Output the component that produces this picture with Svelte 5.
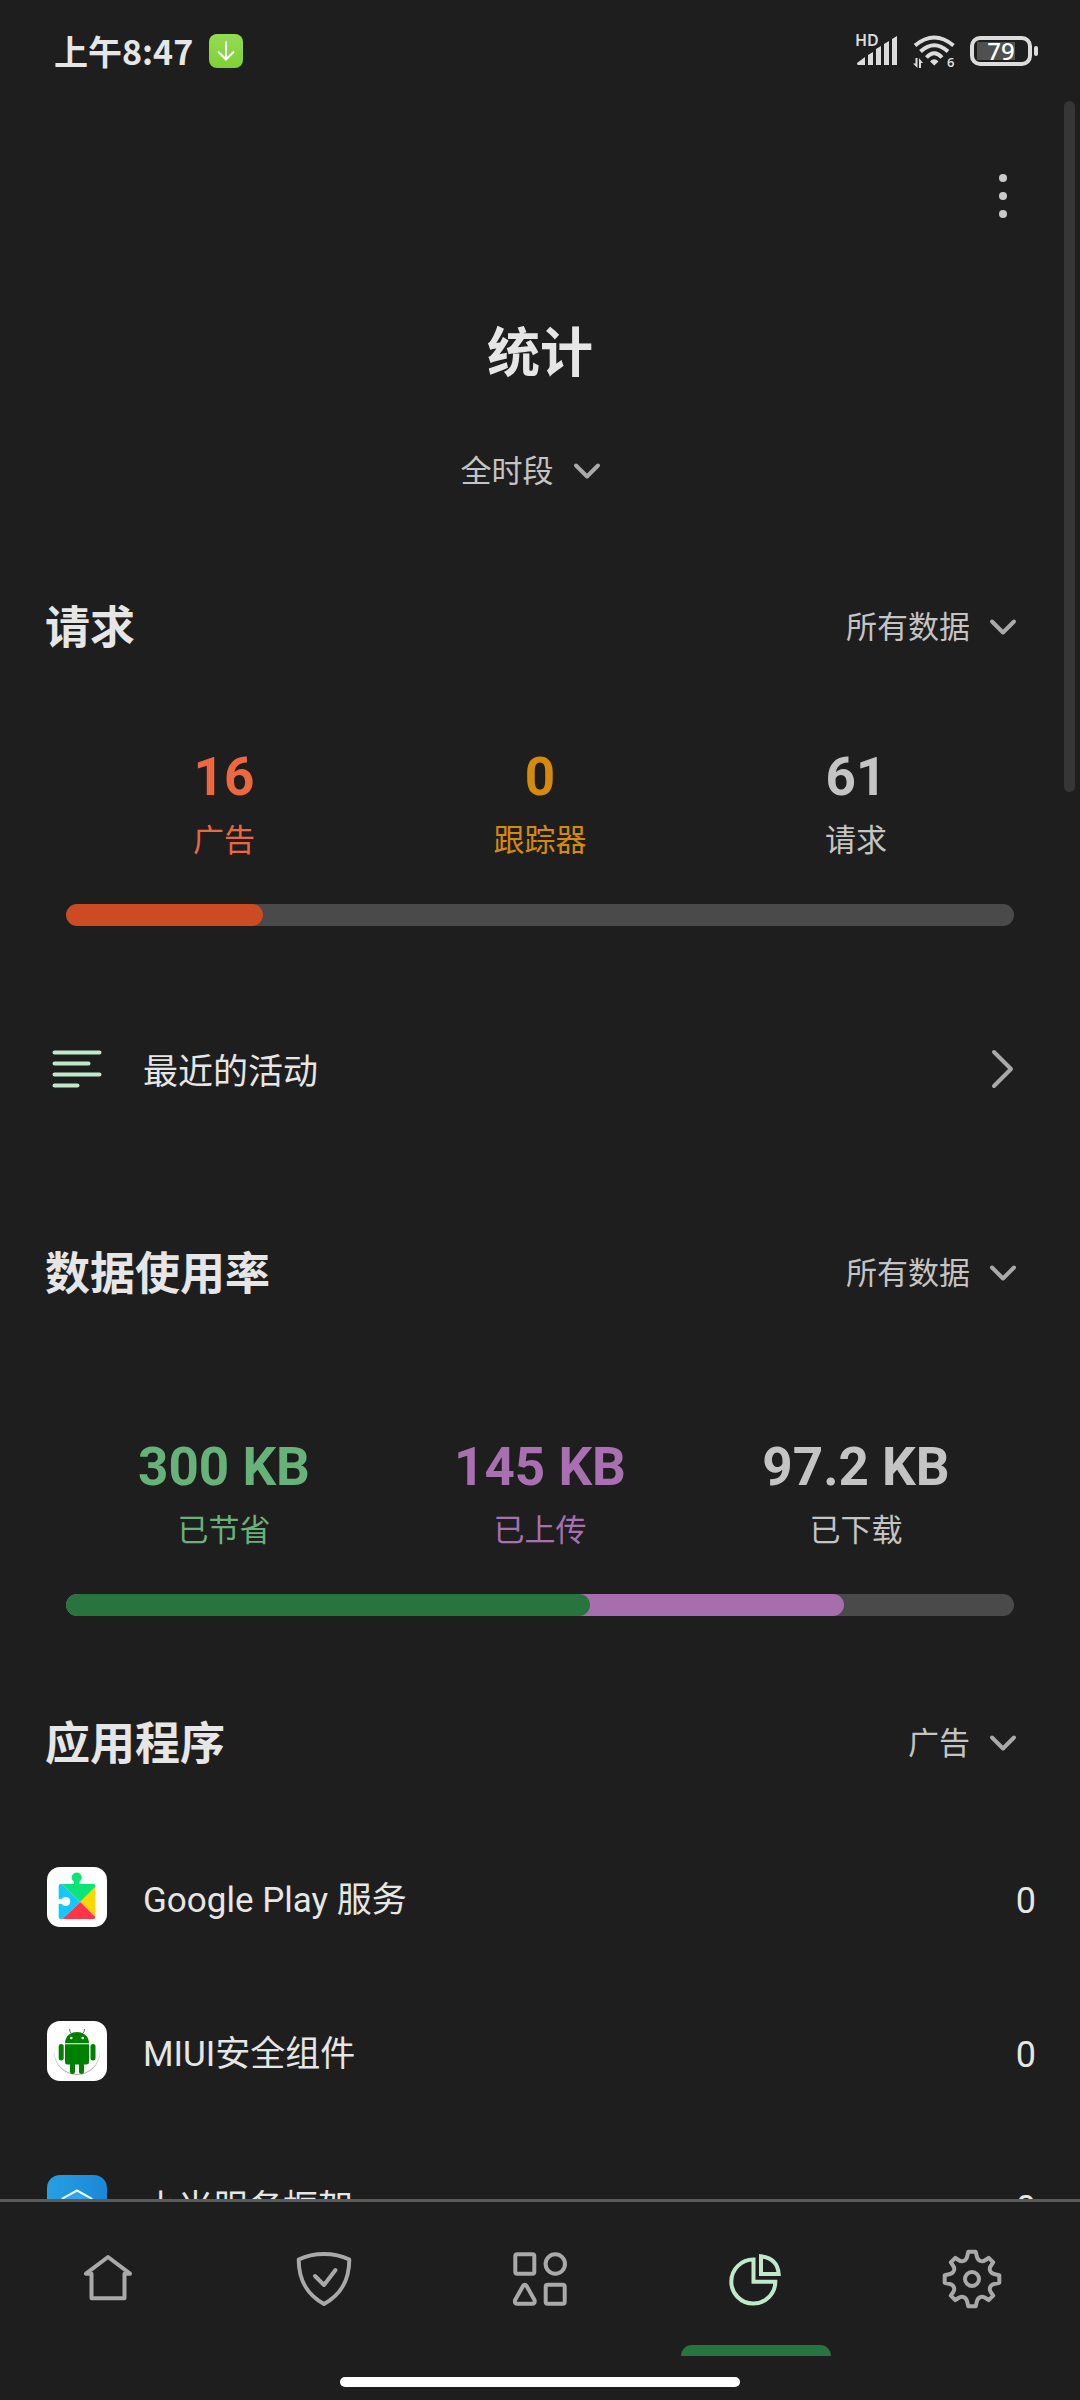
<script lang="ts">
    type Stat = {
        value: string;
        label: string;
        tone: "orange" | "amber" | "green" | "purple" | "neutral";
    };

    type Segment = {
        tone: "orange" | "green" | "purple";
        end: number;
    };

    type AppEntry = {
        name: string;
        icon: "play" | "android" | "xiaomi";
        count: number;
    };

    const requests: Stat[] = [
        { value: "16", label: "广告", tone: "orange" },
        { value: "0", label: "跟踪器", tone: "amber" },
        { value: "61", label: "请求", tone: "neutral" },
    ];

    const traffic: Stat[] = [
        { value: "300 KB", label: "已节省", tone: "green" },
        { value: "145 KB", label: "已上传", tone: "purple" },
        { value: "97.2 KB", label: "已下载", tone: "neutral" },
    ];

    // Longest segment first, so that shorter ones are painted over it
    const requestSegments: Segment[] = [{ tone: "orange", end: 20.8 }];
    const trafficSegments: Segment[] = [
        { tone: "purple", end: 82.1 },
        { tone: "green", end: 55.3 },
    ];

    const apps: AppEntry[] = [
        { name: "Google Play 服务", icon: "play", count: 0 },
        { name: "MIUI安全组件", icon: "android", count: 0 },
        { name: "小米服务框架", icon: "xiaomi", count: 0 },
    ];

    const tabs = ["home", "protection", "apps", "statistics", "settings"];
    let activeTab = $state("statistics");
</script>

{#snippet dropdown(label: string, value: string)}
    <label class="dropdown">
        <select aria-label={label}>
            <option>{value}</option>
        </select>
        <svg class="chevron" viewBox="0 0 34 34" aria-hidden="true">
            <path d="M6 11.5 17 22.5 28 11.5" />
        </svg>
    </label>
{/snippet}

{#snippet statRow(stats: Stat[], segments: Segment[])}
    <div class="stats">
        {#each stats as stat}
            <div class="stat {stat.tone}">
                <strong>{stat.value}</strong>
                <span>{stat.label}</span>
            </div>
        {/each}
    </div>
    <div class="bar">
        {#each segments as segment}
            <div class="segment {segment.tone}" style:width="{segment.end}%"></div>
        {/each}
    </div>
{/snippet}

<div class="screen">
    <header class="status-bar">
        <time>上午8:47</time>
        <svg class="download" viewBox="0 0 34 34" aria-hidden="true">
            <defs>
                <linearGradient id="download-bg" x1="0" y1="0" x2="0" y2="1">
                    <stop offset="0" stop-color="#93dc55" />
                    <stop offset="1" stop-color="#7ed034" />
                </linearGradient>
            </defs>
            <rect width="34" height="34" rx="8" fill="url(#download-bg)" />
            <path d="M17 7.5V25M9 17.5l8 8 8-8" fill="none" stroke="#fff" stroke-width="2" />
        </svg>

        <div class="indicators">
            <svg class="signal" viewBox="0 0 42 34" aria-hidden="true">
                <text x="-1" y="12" font-size="16">HD</text>
                <path d="M1 29 9 23V31H2Q1 31 1 29ZM12 21 17 18V31H12ZM20 15 25 12V31H20ZM28 10 33 7V31H28ZM36 5 41 2V31H36Z" />
            </svg>
            <svg class="wifi" viewBox="0 0 44 36" aria-hidden="true">
                <g fill="none" stroke="#dcdcdc" stroke-width="4">
                    <path d="M3 12.5Q22.3-3.5 41.5 12.5" />
                    <path d="M8.500 18.500Q22.300 6 36 18.500" />
                    <path d="M14.500 24.500Q22.300 16 30 24.500" />
                </g>
                <path d="M18 28.500Q22.300 24 26.500 28.500L22.300 32.500Z" />
                <path d="M3.500 25H5.500V35L1 30.500H3.500ZM7 25 11 30H9V35H7Z" />
                <text x="35" y="34" font-size="13">6</text>
            </svg>
            <div class="battery"><span>79</span></div>
        </div>
    </header>

    <main>
        <div class="toolbar">
            <button type="button" class="menu" aria-label="更多">
                <svg viewBox="0 0 48 48" aria-hidden="true">
                    <circle cx="24" cy="6" r="4" />
                    <circle cx="24" cy="24" r="4" />
                    <circle cx="24" cy="42" r="4" />
                </svg>
            </button>
        </div>

        <h1>统计</h1>
        <div class="period">{@render dropdown("时段", "全时段")}</div>

        <section class="requests">
            <div class="section-head">
                <h2>请求</h2>
                {@render dropdown("请求", "所有数据")}
            </div>
            {@render statRow(requests, requestSegments)}
        </section>

        <button type="button" class="row activity">
            <svg class="row-icon" viewBox="0 0 60 60" aria-hidden="true">
                <path
                    d="M7.500 13.500H52.500M7.500 24.500H41.500M7.500 35.500H52.500M7.500 46.500H30.500"
                    fill="none"
                    stroke="#bfe9c9"
                    stroke-width="4"
                    stroke-linecap="round"
                />
            </svg>
            <span class="row-name">最近的活动</span>
            <svg class="arrow" viewBox="0 0 34 44" aria-hidden="true">
                <path d="M8 5 25 22 8 39" />
            </svg>
        </button>

        <section class="traffic">
            <div class="section-head">
                <h2>数据使用率</h2>
                {@render dropdown("数据使用率", "所有数据")}
            </div>
            {@render statRow(traffic, trafficSegments)}
        </section>

        <section class="applications">
            <div class="section-head">
                <h2>应用程序</h2>
                {@render dropdown("应用程序", "广告")}
            </div>
            <ul>
                {#each apps as app}
                    <li>
                        <button type="button" class="row">
                            <svg class="row-icon" viewBox="0 0 60 60" aria-hidden="true">
                                {#if app.icon === "play"}
                                    <rect width="60" height="60" rx="13" fill="#fff" />
                                    <circle cx="29.700" cy="10.500" r="5" fill="#0be576" />
                                    <path d="M27 12H32.500V20H27Z" fill="#0be576" />
                                    <path d="M13.500 17H15L33.300 35 15.500 52H13.500Q11.700 52 11.700 50V19Q11.700 17 13.500 17Z" fill="#14c8fb" />
                                    <path d="M15 17H46.500Q48.300 17 48.300 19V20L33.300 35Z" fill="#0be576" />
                                    <path d="M48.300 20V50L33.300 35Z" fill="#ffd500" />
                                    <path d="M33.300 35 48.300 50Q48.300 52 46.500 52H15.500Z" fill="#fc3549" />
                                    <circle cx="18.700" cy="34.500" r="4.500" fill="#fff" />
                                    <path d="M11 32.200H17V36.800H11Z" fill="#fff" />
                                {:else if app.icon === "android"}
                                    <rect width="60" height="60" rx="13" fill="#fff" />
                                    <circle cx="30" cy="31" r="23" fill="#aaa" />
                                    <circle cx="30" cy="30" r="23" fill="#fff" />
                                    <g fill="#008000">
                                        <path d="M18 22.300C18 15 23.500 11 30 11S42 15 42 22.300Z" />
                                        <path d="M18 23.300H42V41Q42 43.500 39.500 43.500H37V50.500A2.500 2.500 0 0 1 32 50.500V43.500H28V50.500A2.500 2.500 0 0 1 23 50.500V43.500H20.500Q18 43.500 18 41Z" />
                                        <rect x="11.700" y="23" width="5" height="16.500" rx="2.500" />
                                        <rect x="43.500" y="23" width="5" height="16.500" rx="2.500" />
                                    </g>
                                    <path d="M24.500 12.500Q22.500 11 22.500 8M35.500 12.500Q37.500 11 37.500 8" fill="none" stroke="#567" stroke-width="1" />
                                    <circle cx="24.300" cy="17" r="1.300" fill="#dfffdf" />
                                    <circle cx="35.700" cy="17" r="1.300" fill="#dfffdf" />
                                {:else}
                                    <defs>
                                        <linearGradient id="xiaomi-bg" x1="0" y1="0" x2="1" y2="0">
                                            <stop offset="0" stop-color="#25a0e2" />
                                            <stop offset="1" stop-color="#1d86d8" />
                                        </linearGradient>
                                    </defs>
                                    <rect width="60" height="60" rx="13" fill="url(#xiaomi-bg)" />
                                    <path d="M30 15.500 44.500 23.500V38L30 46 15.500 38V23.500Z" fill="#3aa0e4" stroke="#e6ffff" stroke-width="2" />
                                {/if}
                            </svg>
                            <span class="row-name">{app.name}</span>
                            <span class="row-count">{app.count}</span>
                        </button>
                    </li>
                {/each}
            </ul>
        </section>
    </main>
    <div class="scrollbar"></div>

    <nav>
        {#each tabs as tab}
            <a
                href="#{tab}"
                class:active={tab === activeTab}
                aria-label={tab}
                aria-current={tab === activeTab ? "page" : undefined}
                onclick={() => (activeTab = tab)}
            >
                <svg viewBox="0 0 72 72" aria-hidden="true">
                    {#if tab === "home"}
                        <path d="M36 14 14 30.700H19.500V55.300H52.500V30.700H58Z" />
                    {:else if tab === "protection"}
                        <path d="M36 11C27 11 18 13 10.700 16.500 10.700 39 20 52 36 61 52 52 61.300 39 61.300 16.500 54 13 45 11 36 11Z" />
                        <path d="M27 33 36 42 47.500 27" />
                    {:else if tab === "apps"}
                        <rect x="11.300" y="11.300" width="19" height="19.500" rx="2" />
                        <circle cx="51.300" cy="21" r="9.700" />
                        <path d="M19 43Q20.800 40.500 22.600 43L30.500 57Q31.300 60.700 28.500 60.700H13Q10.300 60.700 11.100 57Z" />
                        <rect x="41.700" y="41.700" width="19" height="19" rx="2" />
                    {:else if tab === "statistics"}
                        <path class="sharp" d="M33.500 16.600V38.800H55.300A22 22 0 1 1 33.500 16.600Z" />
                        <path class="sharp" d="M41 13.300V31H58.700Q57.500 15 41 13.300Z" />
                    {:else}
                        <path
                            d="M32.300 8.700H39.700L41 14C42 18 46 19.500 49.500 17L52.700 14.800 57.200 19.300 55 22.500C52.500 26 54 30 58 31L63.300 32.300V39.700L58 41C54 42 52.500 46 55 49.500L57.200 52.700 52.700 57.200 49.500 55C46 52.500 42 54 41 58L39.700 63.300H32.300L31 58C30 54 26 52.500 22.500 55L19.300 57.200 14.800 52.700 17 49.500C19.500 46 18 42 14 41L8.700 39.700V32.300L14 31C18 30 19.500 26 17 22.500L14.800 19.300 19.300 14.800 22.500 17C26 19.500 30 18 31 14Z"
                        />
                        <circle cx="36" cy="36" r="7" />
                    {/if}
                </svg>
            </a>
        {/each}
    </nav>
    <div class="gesture-area"><div class="gesture-bar"></div></div>
</div>

<style>
    :global(body) {
        background: #1e1e1e;
    }

    .screen {
        --text: #e6e6e6;
        --text-muted: #c4c4c4;
        --icon: #a9a9a9;
        position: relative;
        height: 100vh;
        display: flex;
        flex-direction: column;
        overflow: hidden;
        background: #1e1e1e;
        color: var(--text);
        font-family: Roboto, "Noto Sans CJK SC", sans-serif;
    }

    button,
    select {
        margin: 0;
        padding: 0;
        border: 0;
        background: none;
        color: inherit;
        font: inherit;
    }

    svg {
        display: block;
        flex: none;
    }

    .status-bar {
        flex: none;
        height: 100px;
        box-sizing: border-box;
        display: flex;
        align-items: center;
        padding: 2px 48px 0 54px;
        font-family: "Noto Sans CJK SC", sans-serif;
    }

    time {
        font-size: 34px;
        font-weight: 700;
        line-height: 48px;
    }

    .download {
        width: 34px;
        height: 34px;
        margin-left: 16px;
    }

    .indicators {
        display: flex;
        align-items: center;
        gap: 14px;
        margin-left: auto;
        font-family: "Noto Sans", sans-serif;
    }

    .signal {
        width: 42px;
        height: 34px;
    }

    .wifi {
        width: 44px;
        height: 36px;
    }

    .signal,
    .wifi {
        overflow: visible;
        fill: #dcdcdc;
        font-weight: 600;
    }

    .battery {
        position: relative;
        box-sizing: border-box;
        width: 62px;
        height: 30px;
        padding: 2px;
        border: 4px solid #dcdcdc;
        border-radius: 10px;
        background: linear-gradient(#505050, #505050) 3px 2px / 38px 18px no-repeat;
    }

    .battery::after {
        content: "";
        position: absolute;
        top: 6px;
        right: -10px;
        width: 4px;
        height: 10px;
        border-radius: 2px;
        background: #dcdcdc;
    }

    .battery span {
        display: block;
        font-size: 24px;
        font-weight: 500;
        line-height: 18px;
        text-align: center;
        color: #fff;
    }

    main {
        flex: 1;
        min-height: 0;
        overflow: hidden;
    }

    .toolbar {
        display: flex;
        align-items: center;
        justify-content: flex-end;
        height: 192px;
        padding: 0 53px;
    }

    .menu svg {
        width: 48px;
        height: 48px;
        fill: #cacaca;
    }

    h1,
    h2 {
        margin: 0;
        padding-top: 4px;
        font-weight: 700;
        line-height: 116px;
    }

    h1 {
        font-size: 53px;
        text-align: center;
    }

    h2 {
        font-size: 45px;
    }

    .period {
        display: flex;
        justify-content: center;
        padding: 34px 16px 0 0;
    }

    .dropdown {
        display: flex;
        align-items: center;
        gap: 16px;
        color: var(--text-muted);
    }

    select {
        padding-top: 2px;
        appearance: none;
        font-size: 31px;
        line-height: 48px;
    }

    .chevron {
        width: 34px;
        height: 34px;
    }

    .chevron path,
    .arrow path {
        fill: none;
        stroke: var(--icon);
        stroke-width: 4;
        stroke-linecap: round;
        stroke-linejoin: round;
    }

    .section-head {
        display: flex;
        align-items: center;
        justify-content: space-between;
        padding: 0 60px 0 45px;
    }

    .requests {
        padding-top: 71px;
    }

    .stats {
        display: grid;
        grid-template-columns: repeat(3, 1fr);
        padding: 58px 66px 31px;
    }

    .traffic .stats {
        padding-top: 102px;
    }

    .stat {
        display: flex;
        flex-direction: column;
        align-items: center;
        line-height: 64px;
    }

    .stat strong {
        font-size: 53px;
        font-weight: 700;
    }

    .stat span {
        font-size: 31px;
    }

    .stat.orange {
        color: #ec6841;
    }

    .stat.amber {
        color: #d58a0c;
    }

    .stat.green {
        color: #67b279;
    }

    .stat.purple {
        color: #a870b0;
    }

    .stat.neutral {
        color: #c4c4c4;
    }

    .bar {
        display: grid;
        height: 22px;
        margin: 0 66px;
        border-radius: 11px;
        background: #4a4a4a;
        overflow: hidden;
    }

    .segment {
        grid-area: 1 / 1;
        border-radius: 11px;
    }

    .segment.orange {
        background: #cd4b23;
    }

    .segment.green {
        background: #27743f;
    }

    .segment.purple {
        background: #a76eae;
    }

    .row {
        display: flex;
        align-items: center;
        width: 100%;
        height: 154px;
        padding: 0 44px 0 47px;
        text-align: left;
    }

    .activity {
        margin: 66px 0 67px;
        padding-right: 60px;
    }

    .row-icon {
        width: 60px;
        height: 60px;
        margin-right: 36px;
    }

    .row-name,
    .row-count {
        padding-top: 8px;
        line-height: 48px;
    }

    .row-name {
        flex: 1;
        font-size: 35px;
    }

    .row-count {
        font-size: 36px;
    }

    .arrow {
        width: 34px;
        height: 44px;
    }

    .applications {
        padding-top: 67px;
    }

    ul {
        margin: 17px 0 0;
        padding: 0;
        list-style: none;
    }

    .scrollbar {
        position: absolute;
        top: 101px;
        right: 5px;
        width: 11px;
        height: 691px;
        border-radius: 6px;
        background: #363636;
    }

    nav {
        flex: none;
        display: grid;
        grid-template-columns: repeat(5, 1fr);
        height: 154px;
        border-top: 3px solid #5b5b5b;
    }

    nav a {
        position: relative;
        display: flex;
        align-items: center;
        justify-content: center;
        color: var(--icon);
    }

    nav a.active {
        color: #bfe9c9;
    }

    nav a.active::after {
        content: "";
        position: absolute;
        bottom: 0;
        width: 150px;
        height: 11px;
        border-radius: 11px 11px 0 0;
        background: #27743f;
    }

    nav svg {
        width: 72px;
        height: 72px;
        fill: none;
        stroke: currentColor;
        stroke-width: 4;
        stroke-linecap: round;
        stroke-linejoin: round;
    }

    nav .sharp {
        stroke-linejoin: miter;
    }

    .gesture-area {
        flex: none;
        display: flex;
        justify-content: center;
        padding: 21px 0 13px;
    }

    .gesture-bar {
        width: 37%;
        height: 10px;
        border-radius: 5px;
        background: #fff;
    }
</style>
